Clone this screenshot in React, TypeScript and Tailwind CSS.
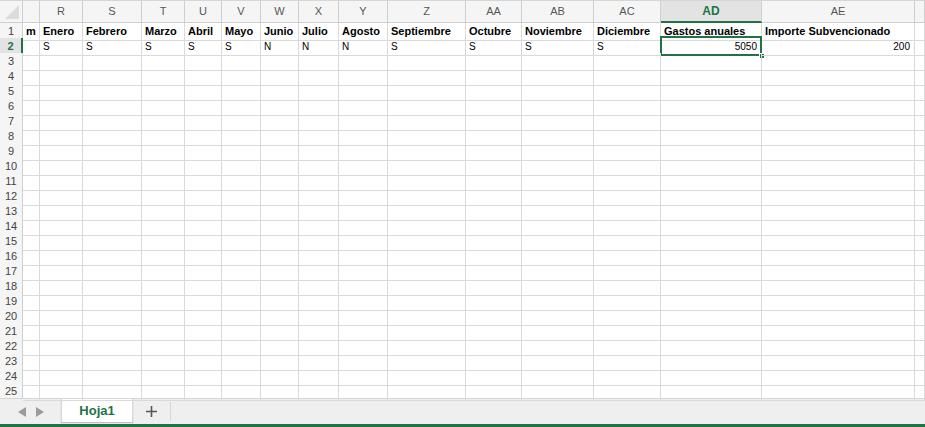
import React from "react";

const cols = ["", "R", "S", "T", "U", "V", "W", "X", "Y", "Z", "AA", "AB", "AC", "AD", "AE", ""];
const row1 = ["m", "Enero", "Febrero", "Marzo", "Abril", "Mayo", "Junio", "Julio", "Agosto", "Septiembre", "Octubre", "Noviembre", "Diciembre", "Gastos anuales", "Importe Subvencionado", ""];
const row2 = ["", "S", "S", "S", "S", "S", "N", "N", "N", "S", "S", "S", "S", "5050", "200", ""];

const grid =
  "grid grid-cols-[23px_17px_43px_59px_43px_37px_39px_38px_40px_49px_78px_56px_72px_67px_101px_153px_1fr]";

const App = () => {
  const rows = Array.from({ length: 25 }, (_, i) => i + 1);
  return (
    <div className="w-[925px] h-[427px] overflow-hidden bg-white flex flex-col font-['Liberation_Sans',Arial,sans-serif]">
      {/* column headers */}
      <div className={`${grid} h-[23px] border-t border-[#d6d6d6] bg-[#f5f5f5]`}>
        <div className="relative border-r border-b border-[#cfcfcf]">
          <svg className="absolute right-[3px] bottom-[3px]" width="14" height="14" viewBox="0 0 14 14">
            <polygon points="14,0 14,14 0,14" fill="#dcdcdc" />
          </svg>
        </div>
        {cols.map((c, i) =>
          c === "AD" ? (
            <div
              key={i}
              className="flex items-center justify-center bg-[#e3e3e3] border-r border-[#cfcfcf] border-b-2 border-b-[#217346] text-[12px] font-bold text-[#217346]"
            >
              {c}
            </div>
          ) : (
            <div
              key={i}
              className="flex items-center justify-center border-r border-b border-[#cfcfcf] text-[11px] text-[#555]"
            >
              {c}
            </div>
          )
        )}
      </div>

      {/* rows */}
      <div className="flex-1 flex flex-col">
        {rows.map((r) => (
          <div key={r} className={`${grid} h-[15px]`}>
            <div
              className={
                r === 2
                  ? "flex items-center justify-center bg-[#e3e3e3] border-b border-[#cfcfcf] border-r-2 border-r-[#217346] text-[11px] font-bold text-[#217346]"
                  : "flex items-center justify-center bg-[#f5f5f5] border-r border-b border-[#cfcfcf] text-[11px] text-[#444]"
              }
            >
              {r}
            </div>
            {cols.map((c, i) => {
              const text = r === 1 ? row1[i] : r === 2 ? row2[i] : "";
              const numeric = r === 2 && (c === "AD" || c === "AE");
              return (
                <div
                  key={i}
                  className={`relative flex items-center border-r border-b border-[#dadada] whitespace-nowrap ${
                    numeric ? "justify-end pr-[4px]" : "pl-[3px]"
                  } ${r === 1 ? "text-[11px] font-bold text-black" : "text-[10px] text-black"}`}
                >
                  {text}
                  {r === 2 && c === "AD" && (
                    <>
                      <div className="absolute -top-[2px] -left-[1px] -right-[1px] -bottom-[1px] border-2 border-[#217346]" />
                      <div className="absolute -right-[4px] -bottom-[4px] w-[6px] h-[6px] bg-[#217346] border border-white" />
                    </>
                  )}
                </div>
              );
            })}
          </div>
        ))}
      </div>

      {/* sheet tabs */}
      <div className="h-[26px] flex items-stretch bg-[#efefef] border-t border-[#d6d6d6]">
        <div className="w-[61px] flex items-center justify-center gap-[10px]">
          <svg width="8" height="10" viewBox="0 0 8 10">
            <polygon points="8,0 8,10 0,5" fill="#9b9b9b" />
          </svg>
          <svg width="8" height="10" viewBox="0 0 8 10">
            <polygon points="0,0 0,10 8,5" fill="#9b9b9b" />
          </svg>
        </div>
        <div className="w-[72px] mb-[2px] bg-white flex items-center justify-center text-[13px] font-bold text-[#217346] shadow-[0_1px_1px_rgba(0,0,0,0.2)] border-x border-[#d6d6d6]">
          Hoja1
        </div>
        <div className="w-[38px] flex items-center justify-center border-r border-[#d6d6d6] my-[3px]">
          <svg width="11" height="11" viewBox="0 0 11 11">
            <path d="M5.5 0v11M0 5.5h11" stroke="#555" strokeWidth="1.6" />
          </svg>
        </div>
        <div className="flex-1" />
      </div>
      <div className="h-[3px] bg-[#217346]" />
    </div>
  );
};

export default App;
